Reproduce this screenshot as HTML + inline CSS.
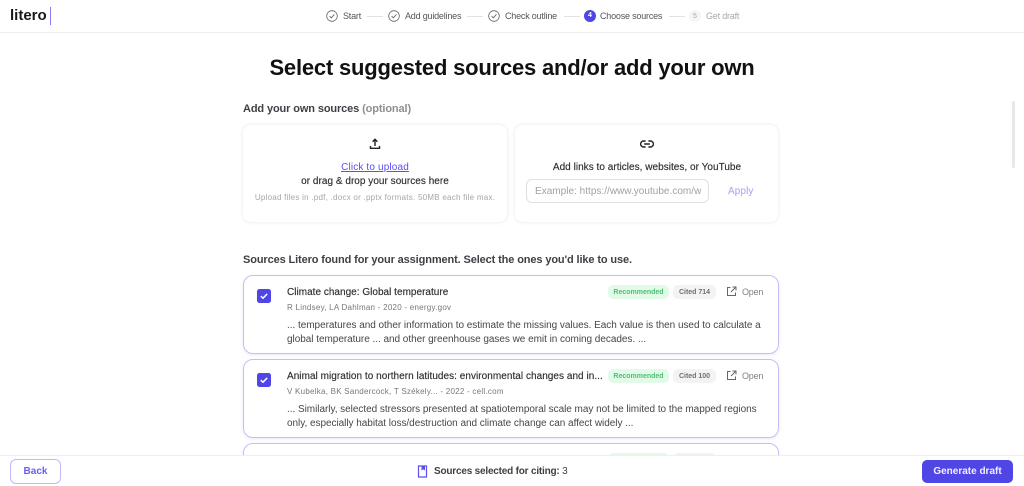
<!DOCTYPE html>
<html><head><meta charset="utf-8"><style>
html,body{margin:0;padding:0;width:1024px;height:486px;overflow:hidden;background:#fff;font-family:"Liberation Sans",sans-serif;color:#27272a}
.a{position:absolute;white-space:nowrap}
.c{transform:translateX(-50%)}
.card{position:absolute;background:#fff;border-radius:10px;box-sizing:border-box}
.own{top:125px;height:97px;box-shadow:0 0 4px rgba(0,0,0,.1);border-radius:8px}
.src{left:243px;width:536px;border:1px solid #c6bff7;box-shadow:0 1px 3px rgba(80,70,230,.12)}
.step{font-size:9px;color:#55555b;top:11px;line-height:10px;letter-spacing:-.2px}
.ln{position:absolute;top:16px;height:1px;width:16px;background:#e2e2e4}
.chk{position:absolute;top:10px}
.tag{position:absolute;height:14px;line-height:15px;border-radius:5px;font-size:7px;font-weight:bold;text-align:center}
.g{background:#e2fbe8;color:#4cc074}.n{background:#f3f3f4;color:#6f6f76}
.t{font-size:10px;color:#2e2e33;line-height:13px;letter-spacing:.02px;-webkit-text-stroke:.15px #2e2e33}
.m{font-size:8px;color:#77777d;line-height:10px;letter-spacing:.25px}
.p{font-size:10px;color:#46464c;line-height:14px;letter-spacing:-.035px}
.op{font-size:9px;color:#808086;line-height:10px;letter-spacing:-.2px}
</style></head><body>

<div class="a" style="left:10px;top:6px;font-size:15px;font-weight:bold;color:#18181b;line-height:20px">litero</div>
<div class="a" style="left:50px;top:7px;width:1px;height:18px;background:#8a80f2"></div>
<div class="a" style="left:0;top:32px;width:1024px;height:1px;background:#efeff0"></div>

<svg class="chk" style="left:326px" width="12" height="12" viewBox="0 0 12 12" fill="none" stroke="#66666c"><circle cx="6" cy="6" r="5.3" stroke-width=".8"/><path d="M3.6 6.2l1.7 1.6 3.1-3.4" stroke-width=".9"/></svg>
<div class="a step" style="left:343px">Start</div><div class="ln" style="left:367px"></div>
<svg class="chk" style="left:388px" width="12" height="12" viewBox="0 0 12 12" fill="none" stroke="#66666c"><circle cx="6" cy="6" r="5.3" stroke-width=".8"/><path d="M3.6 6.2l1.7 1.6 3.1-3.4" stroke-width=".9"/></svg>
<div class="a step" style="left:405px">Add guidelines</div><div class="ln" style="left:467px"></div>
<svg class="chk" style="left:488px" width="12" height="12" viewBox="0 0 12 12" fill="none" stroke="#66666c"><circle cx="6" cy="6" r="5.3" stroke-width=".8"/><path d="M3.6 6.2l1.7 1.6 3.1-3.4" stroke-width=".9"/></svg>
<div class="a step" style="left:505px">Check outline</div><div class="ln" style="left:564px"></div>
<div class="a" style="left:584px;top:10px;width:12px;height:12px;border-radius:50%;background:#4f46e5;color:#fff;font-size:7px;font-weight:bold;line-height:12px;text-align:center">4</div>
<div class="a step" style="left:600px">Choose sources</div><div class="ln" style="left:669px"></div>
<div class="a" style="left:689px;top:10px;width:12px;height:12px;border-radius:50%;background:#f5f5f6;color:#a9a9ae;font-size:7px;line-height:13px;text-align:center">5</div>
<div class="a step" style="left:706px;color:#a9a9ae">Get draft</div>

<div class="a c" style="left:512px;top:53px;font-size:22px;font-weight:bold;color:#111;line-height:30px;letter-spacing:-.2px">Select suggested sources and/or add your own</div>

<div class="a" style="left:243px;top:102px;font-size:11px;font-weight:bold;color:#3f3f45;line-height:14px;letter-spacing:-.12px">Add your own sources <span style="color:#8f8f95">(optional)</span></div>

<div class="card own" style="left:243px;width:264px"></div>
<div class="card own" style="left:515px;width:263px"></div>

<svg class="a" style="left:368px;top:137px" width="14" height="14" viewBox="0 0 14 14" fill="none" stroke="#222" stroke-width="1.4"><path d="M7 9V2.5M4.6 4.7L7 2.3l2.4 2.4M2.5 9v2.3h9V9"/></svg>
<div class="a c" style="left:375px;top:162px;font-size:10px;color:#5b4ff0;text-decoration:underline;line-height:12px;letter-spacing:.15px">Click to upload</div>
<div class="a c" style="left:375px;top:175px;font-size:10px;color:#2e2e33;line-height:13px;letter-spacing:.03px;-webkit-text-stroke:.15px #2e2e33">or drag &amp; drop your sources here</div>
<div class="a c" style="left:375px;top:192px;font-size:8px;color:#a6a6ab;line-height:11px;letter-spacing:.25px">Upload files in .pdf, .docx or .pptx formats. 50MB each file max.</div>

<svg class="a" style="left:639px;top:136px" width="16" height="16" viewBox="0 0 16 16" fill="none" stroke="#222" stroke-width="1.4"><path d="M6.6 5H4.6a3 3 0 000 6h2M9.4 5h2a3 3 0 010 6h-2M5.2 8h5.6"/></svg>
<div class="a c" style="left:647px;top:161px;font-size:10px;color:#2e2e33;line-height:14px;letter-spacing:.03px;-webkit-text-stroke:.15px #2e2e33">Add links to articles, websites, or YouTube</div>
<div class="a" style="left:526px;top:179px;width:183px;height:24px;box-sizing:border-box;border:1px solid #e0e0e2;border-radius:6px"></div>
<div class="a" style="left:535px;top:186px;width:166px;overflow:hidden;font-size:10px;color:#a1a1a6;line-height:12px;letter-spacing:.02px">Example: https://www.youtube.com/watch</div>
<div class="a" style="left:728px;top:186px;font-size:10px;color:#b4adf6;line-height:12px;letter-spacing:.1px;-webkit-text-stroke:.15px #b4adf6">Apply</div>

<div class="a" style="left:243px;top:253px;font-size:11px;font-weight:bold;color:#3f3f45;line-height:14px;letter-spacing:-.12px">Sources Litero found for your assignment. Select the ones you'd like to use.</div>

<div class="card src" style="top:275px;height:79px"></div>
<svg class="a" style="left:257px;top:289px" width="14" height="14" viewBox="0 0 14 14"><rect width="14" height="14" rx="2.5" fill="#4f46e5"/><path d="M3.8 7.2l2.2 2 4.2-4.3" fill="none" stroke="#fff" stroke-width="1.5"/></svg>
<div class="a t" style="left:287px;top:286px">Climate change: Global temperature</div>
<div class="tag g" style="left:608px;top:285px;width:61px">Recommended</div>
<div class="tag n" style="left:673px;top:285px;width:43px">Cited 714</div>
<svg class="a" style="left:726px;top:286px" width="11" height="11" viewBox="0 0 11 11" fill="none" stroke="#66666c"><path d="M4.5 1.5h-3v8h8V6.5M6.5 1h3.5v3.5M10 1L5 6"/></svg>
<div class="a op" style="left:742px;top:287px">Open</div>
<div class="a m" style="left:287px;top:303px">R Lindsey, LA Dahlman - 2020 - energy.gov</div>
<div class="a p" style="left:287px;top:319px">... temperatures and other information to estimate the missing values. Each value is then used to calculate a</div>
<div class="a p" style="left:287px;top:333px">global temperature ... and other greenhouse gases we emit in coming decades. ...</div>

<div class="card src" style="top:359px;height:79px"></div>
<svg class="a" style="left:257px;top:373px" width="14" height="14" viewBox="0 0 14 14"><rect width="14" height="14" rx="2.5" fill="#4f46e5"/><path d="M3.8 7.2l2.2 2 4.2-4.3" fill="none" stroke="#fff" stroke-width="1.5"/></svg>
<div class="a t" style="left:287px;top:370px;letter-spacing:.04px">Animal migration to northern latitudes: environmental changes and in...</div>
<div class="tag g" style="left:608px;top:369px;width:61px">Recommended</div>
<div class="tag n" style="left:673px;top:369px;width:43px">Cited 100</div>
<svg class="a" style="left:726px;top:370px" width="11" height="11" viewBox="0 0 11 11" fill="none" stroke="#66666c"><path d="M4.5 1.5h-3v8h8V6.5M6.5 1h3.5v3.5M10 1L5 6"/></svg>
<div class="a op" style="left:742px;top:371px">Open</div>
<div class="a m" style="left:287px;top:387px">V Kubelka, BK Sandercock, T Székely... - 2022 - cell.com</div>
<div class="a p" style="left:287px;top:403px">... Similarly, selected stressors presented at spatiotemporal scale may not be limited to the mapped regions</div>
<div class="a p" style="left:287px;top:417px">only, especially habitat loss/destruction and climate change can affect widely ...</div>

<div class="card src" style="top:443px;height:40px"></div>
<div class="tag g" style="left:608px;top:453px;width:61px"></div>
<div class="tag n" style="left:673px;top:453px;width:43px"></div>

<div class="a" style="left:1012px;top:101px;width:3px;height:67px;background:#e8e8e9;border-radius:2px"></div>

<div class="a" style="left:0;top:455px;width:1024px;height:31px;background:#fff;border-top:1px solid #efeff0;box-sizing:border-box"></div>
<div class="a" style="left:10px;top:459px;width:51px;height:25px;box-sizing:border-box;border:1px solid #c0baf8;border-radius:6px;text-align:center;font-size:10px;font-weight:bold;color:#6a5ff0;line-height:24px">Back</div>
<svg class="a" style="left:417px;top:465px" width="11" height="13" viewBox="0 0 11 13"><path d="M1.5 1h8v11h-8z" fill="#fff" stroke="#5a50ea" stroke-width="1.2"/><path d="M4.5 1h3.5v4.5L6.3 4.4 4.5 5.5z" fill="#5a50ea"/></svg>
<div class="a" style="left:434px;top:465px;font-size:10px;font-weight:bold;color:#3f3f45;line-height:14px;letter-spacing:-.2px">Sources selected for citing: <span style="font-weight:normal">3</span></div>
<div class="a" style="left:922px;top:460px;width:91px;height:23px;background:#4f46e5;border-radius:5px;text-align:center;font-size:10px;font-weight:bold;color:#f0efff;line-height:24px">Generate draft</div>
</body></html>
